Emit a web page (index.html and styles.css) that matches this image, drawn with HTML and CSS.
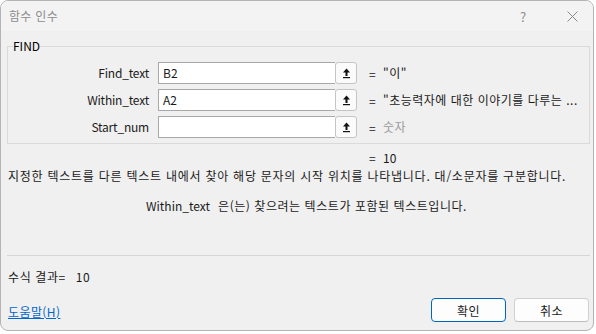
FILE: index.html
```html
<!DOCTYPE html>
<html lang="ko">
<head>
    <meta charset="UTF-8">
    <title>함수 인수</title>
    <link rel="stylesheet" href="styles.css">
</head>
<body>
    <div class="window">
        <div class="titlebar">
            <span class="title">함수 인수</span>
            <span class="help">?</span>
            <span class="close">
                <svg width="11" height="11" viewBox="0 0 11 11"><path d="M0.5 0.5 L10.5 10.5 M10.5 0.5 L0.5 10.5" stroke="#8a8a8a" stroke-width="1" fill="none"/></svg>
            </span>
        </div>

        <div class="content">
            <fieldset class="group">
                <legend>FIND</legend>

                <div class="arg-row">
                    <label class="arg-label">Find_text</label>
                    <div class="arg-input">B2</div>
                    <button class="ref-btn"><svg width="9" height="11" viewBox="0 0 9 11"><path d="M4.5 0.5 L8 4.5 L1 4.5 Z" fill="#111"/><rect x="3.5" y="4" width="2" height="4" fill="#111"/><rect x="1" y="9" width="7" height="1.2" fill="#111"/></svg></button>
                    <span class="eq">=</span>
                    <span class="arg-value">"이"</span>
                </div>

                <div class="arg-row">
                    <label class="arg-label">Within_text</label>
                    <div class="arg-input">A2</div>
                    <button class="ref-btn"><svg width="9" height="11" viewBox="0 0 9 11"><path d="M4.5 0.5 L8 4.5 L1 4.5 Z" fill="#111"/><rect x="3.5" y="4" width="2" height="4" fill="#111"/><rect x="1" y="9" width="7" height="1.2" fill="#111"/></svg></button>
                    <span class="eq">=</span>
                    <span class="arg-value">"초능력자에 대한 이야기를 다루는 ...</span>
                </div>

                <div class="arg-row">
                    <label class="arg-label">Start_num</label>
                    <div class="arg-input"></div>
                    <button class="ref-btn"><svg width="9" height="11" viewBox="0 0 9 11"><path d="M4.5 0.5 L8 4.5 L1 4.5 Z" fill="#111"/><rect x="3.5" y="4" width="2" height="4" fill="#111"/><rect x="1" y="9" width="7" height="1.2" fill="#111"/></svg></button>
                    <span class="eq">=</span>
                    <span class="arg-value hint">숫자</span>
                </div>
            </fieldset>

            <div class="total"><span class="eq">=</span><span>10</span></div>
            <p class="desc">지정한 텍스트를 다른 텍스트 내에서 찾아 해당 문자의 시작 위치를 나타냅니다. 대/소문자를 구분합니다.</p>
            <p class="arg-desc"><span class="arg-name">Within_text</span>은(는) 찾으려는 텍스트가 포함된 텍스트입니다.</p>

            <div class="separator"></div>

            <div class="formula-result">수식 결과=<span class="result-value">10</span></div>

            <div class="footer">
                <a class="help-link" href="#">도움말(H)</a>
                <div class="buttons">
                    <button class="btn primary">확인</button>
                    <button class="btn">취소</button>
                </div>
            </div>
        </div>
    </div>
</body>
</html>
```

FILE: styles.css
```css
body {
    margin: 0;
    background: #ffffff;
    font-family: "Noto Sans CJK KR", "Noto Sans", sans-serif;
    font-size: 12px;
    color: #1a1a1a;
}

.window {
    width: 592px;
    height: 329px;
    border: 1px solid #b4b4b4;
    border-radius: 8px;
    background: #f0f0f0;
    overflow: hidden;
    display: flex;
    flex-direction: column;
}

.titlebar {
    height: 30px;
    flex: none;
    background: #f3f3f3;
    display: flex;
    align-items: center;
    padding-left: 8px;
    color: #8c8c8c;
}

.title {
    flex: 1;
    line-height: 16px;
    letter-spacing: 0.3px;
}

.help {
    width: 12px;
    margin-right: 35px;
    font-size: 13px;
    color: #8c8c8c;
}

.close {
    display: flex;
    margin-right: 15px;
}

.content {
    padding: 0 3px 0 6px;
    display: flex;
    flex-direction: column;
}

.group {
    margin: 8px 0 0 0;
    padding: 9px 0 5px 0;
    border: 1px solid #dadada;
    display: flex;
    flex-direction: column;
    gap: 5px;
}

.group legend {
    margin-left: 5px;
    padding: 0;
    line-height: 14px;
    color: #000;
}

.arg-row {
    display: flex;
    align-items: center;
    height: 22px;
}

.arg-label {
    width: 141px;
    margin-right: 9px;
    text-align: right;
    line-height: 16px;
    letter-spacing: -0.2px;
}

.arg-input {
    width: 172px;
    height: 20px;
    border: 1px solid #a8a8a8;
    border-right: none;
    background: #ffffff;
    padding-left: 4px;
    line-height: 20px;
}

.ref-btn {
    width: 22px;
    height: 22px;
    padding: 0;
    margin: 0;
    border: 1px solid #c4c4c4;
    border-radius: 3px;
    background: #fbfbfb;
    display: flex;
    align-items: center;
    justify-content: center;
}

.eq {
    margin-left: 12px;
    width: 14px;
}

.arg-value {
    line-height: 16px;
    white-space: nowrap;
    letter-spacing: 0.5px;
}

.arg-value.hint {
    color: #9a9a9a;
}

.total {
    margin: 6px 0 0 362px;
    line-height: 16px;
    display: flex;
}

.total .eq {
    margin-left: 0;
}

.desc {
    margin: 2px 0 0 1px;
    line-height: 16px;
    white-space: nowrap;
    letter-spacing: 0.75px;
}

.arg-desc {
    margin: 14px 0 0 139px;
    line-height: 16px;
    letter-spacing: 0.55px;
}

.arg-name {
    margin-right: 8px;
    letter-spacing: 0;
}

.separator {
    margin-top: 41px;
    height: 1px;
    background: #d6d6d6;
}

.formula-result {
    margin: 13px 0 0 1px;
    line-height: 16px;
    letter-spacing: 0.6px;
}

.result-value {
    margin-left: 10px;
}

.footer {
    margin-top: 13px;
    display: flex;
    align-items: center;
    justify-content: space-between;
}

.help-link {
    margin: 4px 0 0 1px;
    color: #0066cc;
    line-height: 16px;
    letter-spacing: 0.4px;
}

.buttons {
    display: flex;
    gap: 8px;
    margin-right: 1px;
}

.btn {
    width: 75px;
    height: 24px;
    font-family: inherit;
    font-size: 12px;
    color: #1a1a1a;
    background: #fdfdfd;
    border: 1px solid #d0d0d0;
    border-bottom-color: #bdbdbd;
    border-radius: 4px;
    padding: 0;
    letter-spacing: 0.5px;
}

.btn.primary {
    border: 1px solid #0067c0;
}
```
